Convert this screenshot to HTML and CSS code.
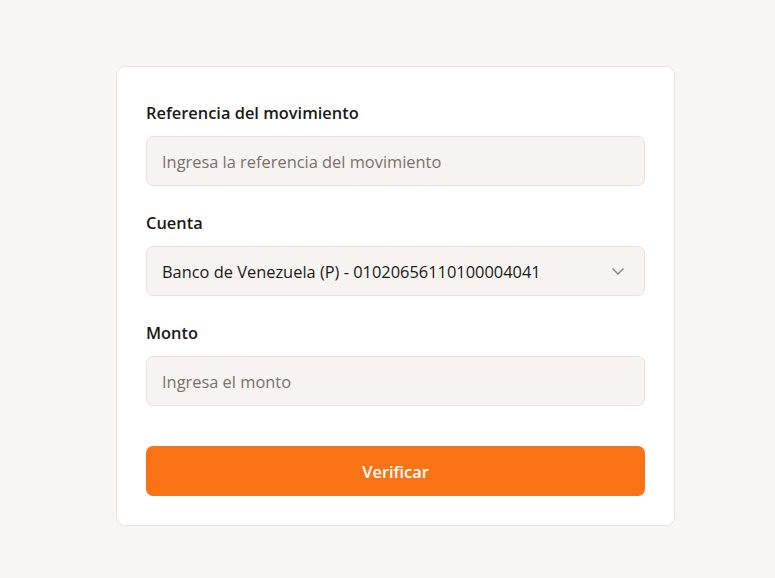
FILE: index.html
```html
<!DOCTYPE html>
<html lang="es">
<head>
<meta charset="utf-8">
<title>Verificar</title>
<link rel="stylesheet" href="styles.css">
</head>
<body>
<main class="page">
  <form class="card">
    <div class="field">
      <label class="label">Referencia del movimiento</label>
      <div class="input placeholder">Ingresa la referencia del movimiento</div>
    </div>
    <div class="field">
      <label class="label">Cuenta</label>
      <div class="input select">
        <span>Banco de Venezuela (P) - 01020656110100004041</span>
        <svg class="chevron" width="12" height="7" viewBox="0 0 12 7"><path d="M1 1l5 5 5-5" fill="none" stroke="#8a8582" stroke-width="1.4" stroke-linecap="round" stroke-linejoin="round"/></svg>
      </div>
    </div>
    <div class="field">
      <label class="label">Monto</label>
      <div class="input placeholder">Ingresa el monto</div>
    </div>
    <button type="button" class="button">Verificar</button>
  </form>
</main>
</body>
</html>
```

FILE: styles.css
```css
html, body {
  margin: 0;
  padding: 0;
  background: #f8f5f2;
}
body {
  font-family: "Open Sans", "Noto Sans", sans-serif;
  color: #1c1917;
}
.page {
  padding: 66px 0 0 16px;
}
.card {
  box-sizing: border-box;
  width: 559px;
  margin: 0 auto;
  background: #ffffff;
  border: 1px solid #e9e4e0;
  border-radius: 9px;
  padding: 34px 29px 29px;
  display: flex;
  flex-direction: column;
}
.field {
  display: flex;
  flex-direction: column;
  gap: 11px;
  margin-bottom: 25px;
}
.field:last-of-type {
  margin-bottom: 40px;
}
.label {
  font-size: 16.4px;
  font-weight: 600;
  line-height: 24px;
}
.input {
  box-sizing: border-box;
  height: 50px;
  background: #f7f3f0;
  border: 1px solid #e8e3df;
  border-radius: 7px;
  padding: 0 15px;
  display: flex;
  align-items: center;
  font-size: 16.4px;
}
.placeholder {
  color: #7a716c;
}
.select {
  justify-content: space-between;
  color: #1c1917;
}
.chevron {
  margin-right: 5px;
}
.button {
  height: 50px;
  border: none;
  border-radius: 7px;
  background: #f97316;
  color: #ffffff;
  font-family: inherit;
  font-size: 16.4px;
  font-weight: 600;
}
```
